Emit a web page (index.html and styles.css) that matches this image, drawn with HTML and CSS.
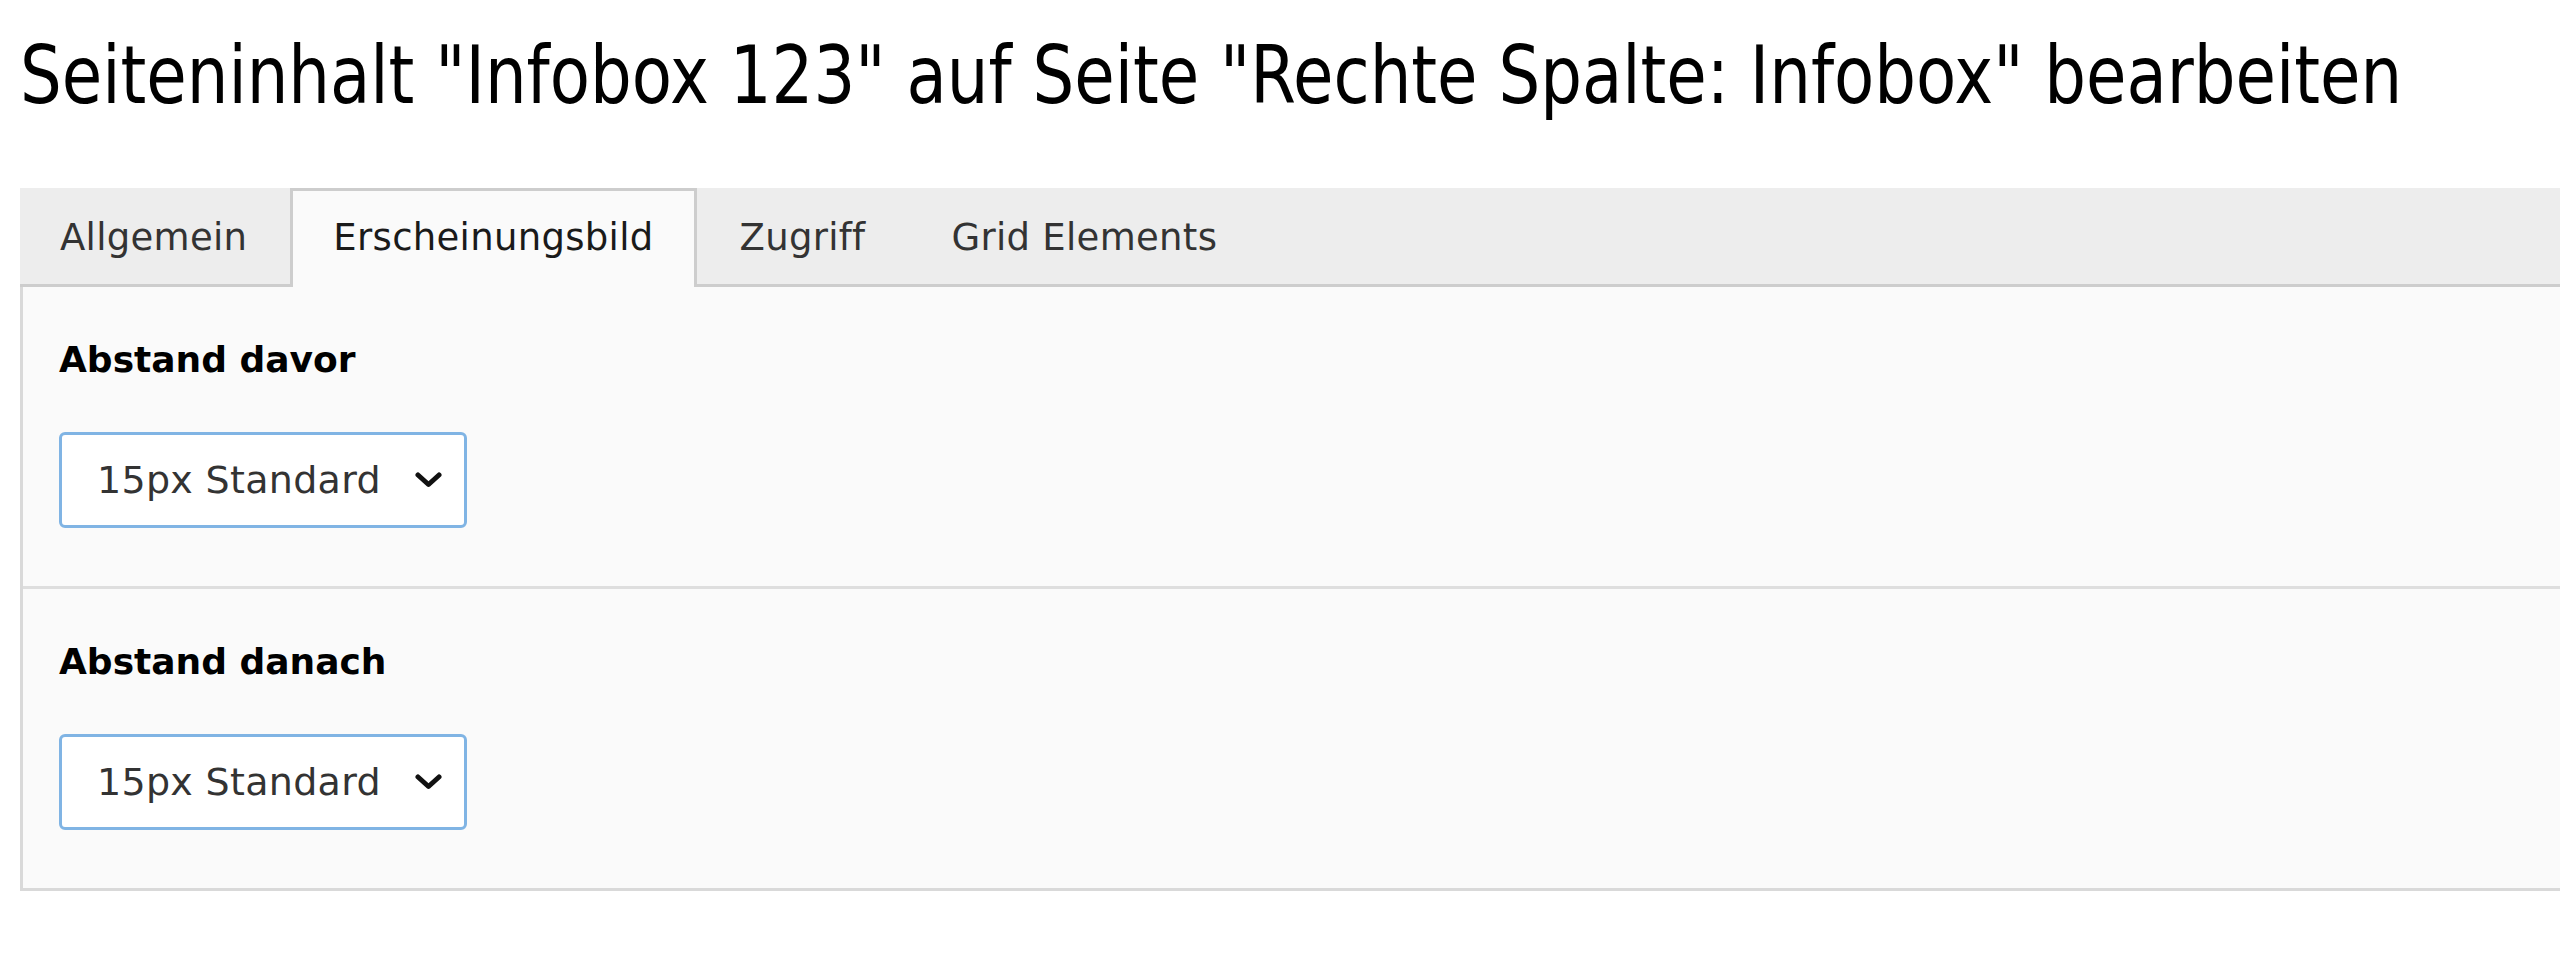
FILE: index.html
```html
<!DOCTYPE html>
<html lang="de">
<head>
<meta charset="utf-8">
<title>Seiteninhalt bearbeiten</title>
<link rel="stylesheet" href="styles.css">
</head>
<body>
<div class="page">
  <h1 class="title"><span class="title-text">Seiteninhalt "Infobox 123" auf Seite "Rechte Spalte: Infobox" bearbeiten</span></h1>
  <div class="editor">
    <div class="tabs">
      <div class="tab">Allgemein</div>
      <div class="tab active">Erscheinungsbild</div>
      <div class="tab">Zugriff</div>
      <div class="tab">Grid Elements</div>
    </div>
    <div class="panel">
      <div class="field">
        <div class="label">Abstand davor</div>
        <div class="select">
          <span class="value">15px Standard</span>
          <svg class="chevron" width="27" height="16" viewBox="0 0 27 16"><path d="M3 3 L13.5 12.5 L24 3" fill="none" stroke="#111" stroke-width="5" stroke-linecap="round" stroke-linejoin="round"/></svg>
        </div>
      </div>
      <div class="field">
        <div class="label">Abstand danach</div>
        <div class="select">
          <span class="value">15px Standard</span>
          <svg class="chevron" width="27" height="16" viewBox="0 0 27 16"><path d="M3 3 L13.5 12.5 L24 3" fill="none" stroke="#111" stroke-width="5" stroke-linecap="round" stroke-linejoin="round"/></svg>
        </div>
      </div>
    </div>
  </div>
</div>
</body>
</html>
```

FILE: styles.css
```css
html, body {
  margin: 0;
  padding: 0;
  background: #ffffff;
  overflow: hidden;
}

.page {
  padding: 30px 0 0 20px;
  font-family: "DejaVu Sans", Verdana, sans-serif;
}

.title {
  margin: 0 0 66px;
  font-family: "DejaVu Sans", sans-serif;
  font-weight: normal;
  font-size: 80px;
  line-height: 92px;
  color: #000;
  white-space: nowrap;
  overflow: hidden;
}

.title-text {
  display: inline-block;
  transform: scaleX(0.822);
  transform-origin: 0 0;
}

.tabs {
  display: flex;
  align-items: flex-start;
  background: #ededed;
  border-bottom: 3px solid #cdcdcd;
}

.tab {
  font-size: 37px;
  line-height: 43px;
  letter-spacing: 0.3px;
  color: #333;
  padding: 25px 40px;
  border: 3px solid transparent;
  border-bottom: 0;
  margin-bottom: -3px;
  white-space: nowrap;
}

.tab:first-child {
  padding-left: 37px;
}

.tab.active {
  background: #fafafa;
  border-color: #cdcdcd;
  padding-bottom: 28px;
  color: #1a1a1a;
}

.panel {
  background: #fafafa;
  border: 3px solid #d9d9d9;
  border-top: 0;
  border-right: 0;
}

.field {
  padding: 51px 36px 58px;
}

.field + .field {
  border-top: 3px solid #dedede;
}

.label {
  font-size: 36px;
  line-height: 43px;
  font-weight: bold;
  color: #000;
  margin-bottom: 51px;
}

.select {
  box-sizing: border-box;
  width: 408px;
  height: 96px;
  background: #fff;
  border: 3px solid #80b4e4;
  border-radius: 6px;
  display: flex;
  align-items: center;
  justify-content: space-between;
  padding: 0 22px 0 35px;
}

.value {
  font-size: 38px;
  line-height: 43px;
  letter-spacing: 0.3px;
  color: #333;
}

.chevron {
  display: block;
}
```
